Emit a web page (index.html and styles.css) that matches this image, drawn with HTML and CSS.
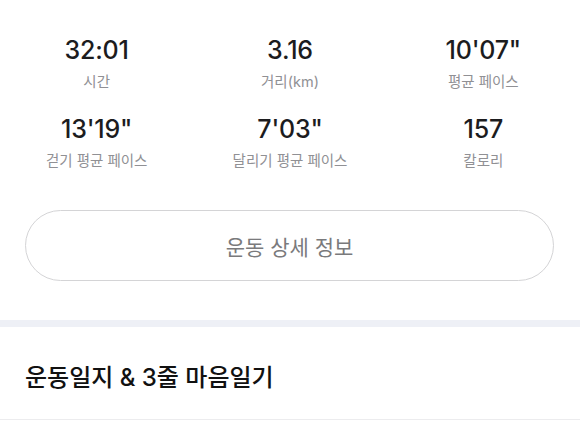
FILE: index.html
```html
<!DOCTYPE html>
<html lang="ko">
<head>
<meta charset="utf-8">
<link rel="stylesheet" href="styles.css">
</head>
<body>
<div class="page">
  <section class="stats">
    <div class="stat"><div class="value">32:01</div><div class="label">시간</div></div>
    <div class="stat"><div class="value">3.16</div><div class="label">거리(km)</div></div>
    <div class="stat"><div class="value">10'07"</div><div class="label">평균 페이스</div></div>
    <div class="stat"><div class="value">13'19"</div><div class="label">걷기 평균 페이스</div></div>
    <div class="stat"><div class="value">7'03"</div><div class="label">달리기 평균 페이스</div></div>
    <div class="stat"><div class="value">157</div><div class="label">칼로리</div></div>
  </section>
  <div class="btn-wrap">
    <div class="detail-btn">운동 상세 정보</div>
  </div>
  <div class="divider"></div>
  <section class="journal">
    <h2 class="journal-title">운동일지 &amp; 3줄 마음일기</h2>
  </section>
</div>
</body>
</html>
```
FILE: styles.css
```css
html, body {
  margin: 0;
  padding: 0;
  background: #ffffff;
}
body {
  font-family: Inter, "Noto Sans CJK KR", sans-serif;
}
.page {
  width: 580px;
}
.stats {
  display: grid;
  grid-template-columns: repeat(3, 1fr);
  row-gap: 22px;
  padding-top: 35px;
}
.stat {
  text-align: center;
}
.value {
  font-family: Inter, "Noto Sans CJK KR", sans-serif;
  font-weight: 500;
  font-size: 25px;
  line-height: 30px;
  color: #1c1c1e;
  letter-spacing: -0.2px;
}
.label {
  font-family: Inter, "Noto Sans CJK KR", sans-serif;
  font-size: 14.5px;
  line-height: 20px;
  color: #909094;
  margin-top: 7px;
}
.btn-wrap {
  padding: 0 26px 0 25px;
  margin-top: 39px;
}
.detail-btn {
  height: 69px;
  border: 1.5px solid #d4d4d6;
  border-radius: 36px;
  display: flex;
  align-items: center;
  justify-content: center;
  font-family: "Noto Sans CJK KR", sans-serif;
  font-size: 21px;
  color: #7a7a7c;
}
.divider {
  margin-top: 39px;
  height: 7px;
  background: #eef0f6;
}
.journal {
  height: 93px;
  display: flex;
  align-items: center;
  padding-left: 25px;
  padding-top: 5px;
  box-sizing: border-box;
  border-bottom: 1px solid #ececee;
}
.journal-title {
  margin: 0;
  font-family: Inter, "Noto Sans CJK KR", sans-serif;
  font-weight: 500;
  font-size: 24px;
  color: #111111;
}
```
